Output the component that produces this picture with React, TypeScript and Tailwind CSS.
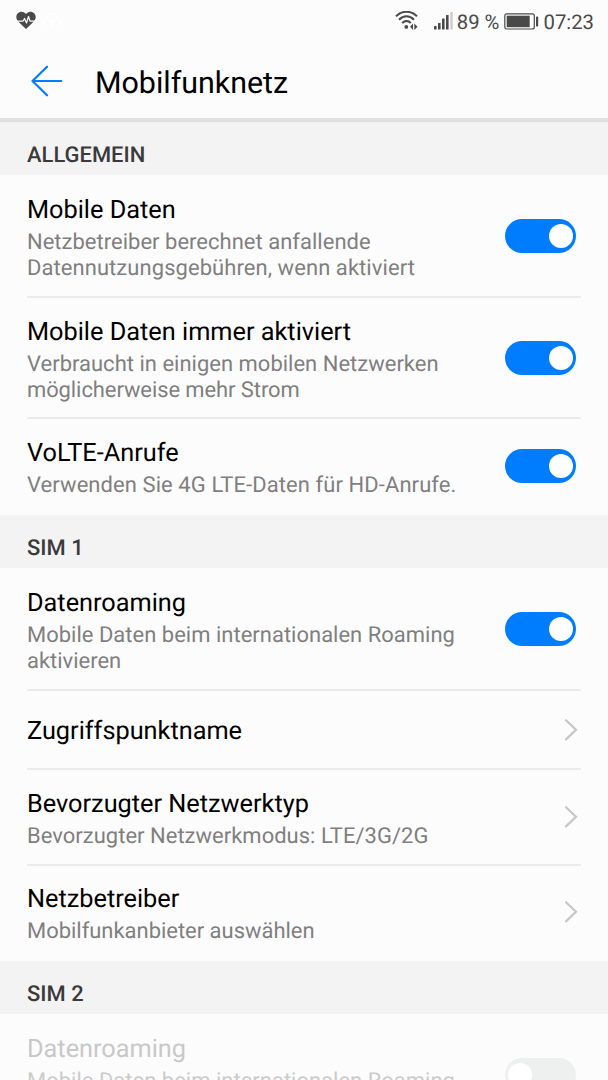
import React from "react";

function Toggle({ on }: { on: boolean }) {
  return (
    <div
      role="switch"
      aria-checked={on}
      className={`mr-8 flex h-[34px] w-[71px] shrink-0 items-center rounded-full px-[3px] ${
        on ? "justify-end bg-[#007dff]" : "justify-start bg-[#eef0ef]"
      }`}
    >
      <div className="size-6 rounded-full bg-white" />
    </div>
  );
}

function Chevron() {
  return (
    <svg className="mr-[30px] h-6 w-[14px] shrink-0" viewBox="0 0 14 24" fill="none" stroke="#c6c6c6" strokeWidth="2.2" strokeLinecap="round">
      <path d="M2 2.2 12 11.8 2 21.4" />
    </svg>
  );
}

function Section({ title }: { title: string }) {
  return (
    <h2 className="flex h-[53px] shrink-0 items-end bg-[#f3f3f3] pb-[6px] pl-[27px] text-[21.95px] leading-[26px] font-medium text-[#3a3a3a]">
      {title}
    </h2>
  );
}

type Line = { text: string; tracking?: string };

type RowProps = {
  title: string;
  lines?: Line[];
  height: string;
  control: React.ReactNode;
  last?: boolean;
  disabled?: boolean;
};

function Row({ title, lines = [], height, control, last, disabled }: RowProps) {
  return (
    <div className={`relative flex shrink-0 items-center justify-between pl-[27px] ${height}`}>
      <div className={`whitespace-nowrap ${lines.length > 0 ? "pt-[6px]" : "pt-1"}`}>
        <div className={`text-[25.3px] leading-[30px] ${disabled ? "text-[#c8c8c8]" : "text-black"}`}>{title}</div>
        {lines.length > 0 && (
          <div className={`pt-1 text-[21.95px] leading-[26px] ${disabled ? "text-[#cbcbcb]" : "text-[#7f7f7f]"}`}>
            {lines.map((line) => (
              <div key={line.text} className={line.tracking}>
                {line.text}
              </div>
            ))}
          </div>
        )}
      </div>
      {control}
      {!last && <div className="absolute right-[27px] -bottom-px left-[27px] h-[2px] bg-[#ebebeb]" />}
    </div>
  );
}

function StatusBar() {
  return (
    <div className="flex h-[42px] shrink-0 items-center justify-between pr-[14px] pl-4 text-[20.3px] text-[#494949]">
      <div className="flex items-center gap-[6px] pb-0.5">
        <svg className="h-[19px] w-5" viewBox="0 0 20 19">
          <path fill="#494949" d="M10 18 2.2 10.4C-3.3 4.3 4.5-3.2 10 2.9c5.5-6.1 13.3 1.4 7.8 7.5Z" />
          <path d="M1 10.2H7L8.5 7.5l2 4.5 2-6.5 1.6 4.7H19" fill="none" stroke="#fcfcfc" strokeWidth="1.2" strokeLinejoin="round" />
        </svg>
        <svg className="h-4 w-5" viewBox="0 0 20 16" fill="none" stroke="#ffffff" strokeWidth="1.6">
          <path d="M5 13C-1 12 0 5 5 6c1-6 9-6 10 0 5-1 6 6 0 7M10 15V8M7 10l3-3 3 3" />
        </svg>
      </div>
      <div className="flex items-center">
        <svg className="mr-[15px] h-5 w-6" viewBox="0 0 24 20" fill="none" stroke="#494949" strokeWidth="2">
          <path d="M1 5.3C7-.8 16-.8 22 5.3M4 8.7c4.5-4.5 10.5-4.5 15 0M7.2 12c2.7-2.7 6-2.7 8.6 0" />
          <circle cx="11.3" cy="15.9" r="1.9" fill="#494949" stroke="none" />
          <path d="m18 12.6-3 3.2 3 3.2ZM19.3 12.6l3.2 3.2-3.2 3.2Z" fill="#494949" stroke="none" />
        </svg>
        <svg className="mr-1 h-[19px] w-[19px] -translate-y-px" viewBox="0 0 19 19" fill="#494949">
          <rect x="0" y="15" width="2.6" height="3.6" rx=".5" />
          <rect x="4" y="12" width="2.6" height="6.6" rx=".5" />
          <rect x="8" y="7.5" width="2.6" height="11.1" rx=".5" />
          <rect x="12" y="4" width="2.6" height="14.6" rx=".5" />
          <rect x="16.3" y="1" width="2.4" height="17.6" rx=".5" fill="#cccccc" />
        </svg>
        <span className="pt-0.5">89 %</span>
        <svg className="mr-1 ml-[5px] h-[17px] w-[35px]" viewBox="0 0 35 17">
          <rect x=".8" y=".8" width="29.5" height="15.2" rx="2" fill="none" stroke="#494949" strokeWidth="1.2" />
          <rect x="2.7" y="2.7" width="23" height="11.5" fill="#494949" />
          <rect x="32" y="3.6" width="2.2" height="9.8" rx=".7" fill="#494949" />
        </svg>
        <span className="pt-0.5">07:23</span>
      </div>
    </div>
  );
}

export default function App() {
  return (
    <div className="flex h-[1080px] w-[608px] flex-col overflow-hidden bg-[#fcfcfc] font-[Roboto,sans-serif] [text-rendering:geometricPrecision]">
      <StatusBar />
      <header className="flex h-20 shrink-0 items-center border-b-4 border-[#e0e0e0] pt-0.5 pl-[31px]">
        <svg className="mr-8 h-8 w-8" viewBox="0 0 32 32" fill="none" stroke="#007dff" strokeWidth="2.2" strokeLinecap="round" strokeLinejoin="round">
          <path d="M16 1.7 1.5 16 16 30.3M1.5 16h28.8" />
        </svg>
        <h1 className="pt-[5px] text-[30.4px] leading-9 text-black">Mobilfunknetz</h1>
      </header>

      <Section title="ALLGEMEIN" />
      <Row
        title="Mobile Daten"
        lines={[
          { text: "Netzbetreiber berechnet anfallende", tracking: "tracking-[0.04px]" },
          { text: "Datennutzungsgebühren, wenn aktiviert", tracking: "tracking-[0.09px]" },
        ]}
        height="h-[122px]"
        control={<Toggle on />}
      />
      <Row
        title="Mobile Daten immer aktiviert"
        lines={[
          { text: "Verbraucht in einigen mobilen Netzwerken", tracking: "tracking-[0.03px]" },
          { text: "möglicherweise mehr Strom", tracking: "tracking-[-0.07px]" },
        ]}
        height="h-[121px]"
        control={<Toggle on />}
      />
      <Row
        title="VoLTE-Anrufe"
        lines={[{ text: "Verwenden Sie 4G LTE-Daten für HD-Anrufe.", tracking: "tracking-[0.1px]" }]}
        height="h-[97px] pb-px"
        control={<Toggle on />}
        last
      />

      <Section title="SIM 1" />
      <Row
        title="Datenroaming"
        lines={[{ text: "Mobile Daten beim internationalen Roaming", tracking: "tracking-[0.03px]" }, { text: "aktivieren" }]}
        height="h-[122px]"
        control={<Toggle on />}
      />
      <Row title="Zugriffspunktname" height="h-[79px]" control={<Chevron />} />
      <Row
        title="Bevorzugter Netzwerktyp"
        lines={[{ text: "Bevorzugter Netzwerkmodus: LTE/3G/2G", tracking: "tracking-[0.04px]" }]}
        height="h-[96px]"
        control={<Chevron />}
      />
      <Row
        title="Netzbetreiber"
        lines={[{ text: "Mobilfunkanbieter auswählen" }]}
        height="h-[96px] pb-[2px]"
        control={<Chevron />}
        last
      />

      <Section title="SIM 2" />
      <Row
        title="Datenroaming"
        lines={[{ text: "Mobile Daten beim internationalen Roaming", tracking: "tracking-[0.03px]" }, { text: "aktivieren" }]}
        height="h-[122px]"
        control={<Toggle on={false} />}
        disabled
      />
    </div>
  );
}
